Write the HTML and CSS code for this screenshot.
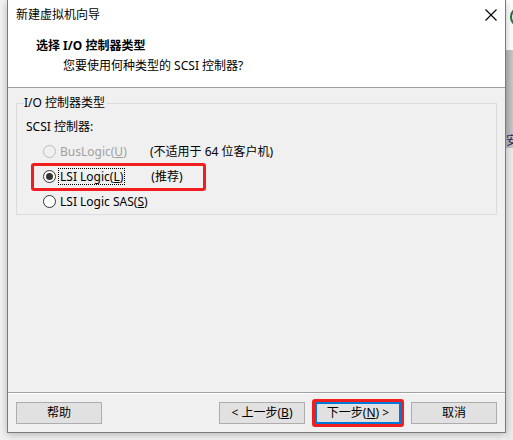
FILE: index.html
```html
<!DOCTYPE html>
<html lang="zh-CN">
<head>
<meta charset="utf-8">
<title>新建虚拟机向导</title>
<link rel="stylesheet" href="styles.css">
</head>
<body>
<div class="page">
  <div class="strip-left"></div>
  <div class="dialog">
    <div class="header">
      <div class="titlebar">
        <span class="title">新建虚拟机向导</span>
        <svg class="close" width="12" height="12" viewBox="0 0 12 12"><path d="M0.5 0.5 L11.5 11.5 M11.5 0.5 L0.5 11.5" stroke="#000" stroke-width="1.1" fill="none"/></svg>
      </div>
      <div class="heading">选择 I/O 控制器类型</div>
      <div class="subtitle">您要使用何种类型的 SCSI 控制器?</div>
    </div>
    <div class="body">
      <fieldset class="group">
        <legend class="group-label">I/O 控制器类型</legend>
        <div class="group-sub">SCSI 控制器:</div>
        <div class="radio-row disabled">
          <span class="radio"></span>
          <span class="radio-text">BusLogic(<u>U</u>)</span>
          <span class="note">(不适用于 64 位客户机)</span>
        </div>
        <div class="radio-row">
          <span class="radio checked"></span>
          <span class="radio-text focus">LSI Logic(<u>L</u>)</span>
          <span class="note">(推荐)</span>
          <span class="mark mark-radio"></span>
        </div>
        <div class="radio-row">
          <span class="radio"></span>
          <span class="radio-text">LSI Logic SAS(<u>S</u>)</span>
        </div>
      </fieldset>
    </div>
    <div class="footer">
      <button class="btn">帮助</button>
      <div class="spacer"></div>
      <button class="btn">&lt; 上一步(<u>B</u>)</button>
      <div class="next-wrap">
        <button class="btn default">下一步(<u>N</u>) &gt;</button>
        <span class="mark mark-next"></span>
      </div>
      <button class="btn">取消</button>
    </div>
  </div>
  <div class="strip-right">
    <div class="r-top">
      <svg width="7" height="50" viewBox="0 0 7 50"><circle cx="14" cy="17" r="9" stroke="#1f7a3c" stroke-width="2.2" fill="none"/></svg>
    </div>
    <div class="r-mid"><span class="r-glyph">安</span></div>
    <div class="r-bot"></div>
  </div>
</div>
</body>
</html>
```
FILE: styles.css
```css
* { box-sizing: border-box; }
html, body { margin: 0; padding: 0; }
body {
  width: 513px;
  height: 440px;
  overflow: hidden;
  background: #f3f3f3;
  font-family: "Noto Sans", "Noto Sans CJK SC", sans-serif;
  font-size: 12px;
  color: #000;
}
.page {
  display: flex;
  width: 513px;
  height: 440px;
}
.strip-left {
  width: 7px;
  flex: none;
  background: #f2f2f2;
}
.dialog {
  width: 499px;
  height: 433px;
  flex: none;
  border: 1px solid #7a7a7a;
  border-top: none;
  background: #f0f0f0;
  box-shadow: 0 2px 8px rgba(0,0,0,0.25);
  display: flex;
  flex-direction: column;
  position: relative;
  z-index: 1;
}
.header {
  height: 88px;
  background: #fff;
  border-bottom: 1px solid #a0a0a0;
  flex: none;
}
.titlebar {
  height: 30px;
  display: flex;
  align-items: center;
  justify-content: space-between;
  padding: 0 8px 0 8px;
}
.title { line-height: 16px; }
.heading {
  font-weight: bold;
  line-height: 16px;
  margin-top: 8px;
  padding-left: 28px;
  white-space: nowrap;
}
.subtitle {
  line-height: 16px;
  margin-top: 4px;
  padding-left: 55px;
  white-space: nowrap;
}
.body {
  height: 304px;
  flex: none;
  padding: 8px 8px 0 8px;
}
.group {
  margin: 0;
  width: 481px;
  height: 119px;
  border: 1px solid #dcdcdc;
  padding: 0 0 0 9px;
  position: relative;
}
.group-label {
  padding: 0 1px 0 0;
  margin-left: -2px;
  line-height: 14px;
}
.group-sub {
  line-height: 16px;
  margin-top: 9px;
}
.radio-row {
  display: flex;
  align-items: center;
  height: 25px;
  padding-left: 17px;
  position: relative;
  white-space: nowrap;
}
.group-sub + .radio-row { margin-top: 4px; }
.radio {
  width: 13px;
  height: 13px;
  border: 1px solid #333;
  border-radius: 50%;
  background: #fff;
  flex: none;
  position: relative;
}
.radio.checked::after {
  content: "";
  position: absolute;
  left: 2px; top: 2px;
  width: 7px; height: 7px;
  border-radius: 50%;
  background: #333;
}
.radio-text {
  margin-left: 2px;
  line-height: 15px;
  padding: 0 1px;
  border: 1px solid transparent;
  min-width: 92px;
  flex: none;
}
.radio-text.focus {
  border: 1px dotted #000;
  min-width: 0;
  margin-right: 26px;
}
.note { line-height: 16px; }
.disabled .radio { border-color: #bcbcbc; background: #f0f0f0; }
.disabled .radio-text { color: #a0a0a0; }
.mark {
  position: absolute;
  border: 3px solid #f01e1e;
  border-radius: 3px;
  pointer-events: none;
}
.mark-radio {
  left: 5px;
  top: -1px;
  width: 175px;
  height: 28px;
}
.footer {
  flex: 1;
  border-top: 1px solid #a0a0a0;
  display: flex;
  align-items: flex-start;
  padding: 9px 8px 0 8px;
  box-shadow: inset 0 1px 0 #fff;
}
.spacer { flex: 1; }
.btn {
  width: 86px;
  height: 22px;
  background: #e1e1e1;
  border: 1px solid #adadad;
  font-family: inherit;
  font-size: 12px;
  line-height: 16px;
  padding: 0;
  margin: 0 0 0 10px;
  color: #000;
  white-space: nowrap;
}
.btn:first-child { margin-left: 0; }
.btn u { text-underline-offset: 1px; }
.next-wrap {
  position: relative;
  margin-left: 10px;
  display: flex;
}
.next-wrap .btn { margin-left: 0; }
.btn.default {
  border: 2px solid #0078d7;
}
.mark-next {
  left: -3px;
  top: -3px;
  width: 92px;
  height: 28px;
}
.strip-right {
  flex: 1;
  display: flex;
  flex-direction: column;
  overflow: hidden;
}
.r-top {
  height: 50px;
  background: #fff;
}
.r-top svg { display: block; }
.r-mid {
  height: 98px;
  background: linear-gradient(90deg, #b8b8b8, #c8c8c8);
  position: relative;
  overflow: hidden;
}
.r-glyph {
  position: absolute;
  left: 0;
  top: 85px;
  font-size: 12px;
  line-height: 12px;
  color: #1a2a6a;
}
.r-bot {
  flex: 1;
  background: #ececec;
}
```
